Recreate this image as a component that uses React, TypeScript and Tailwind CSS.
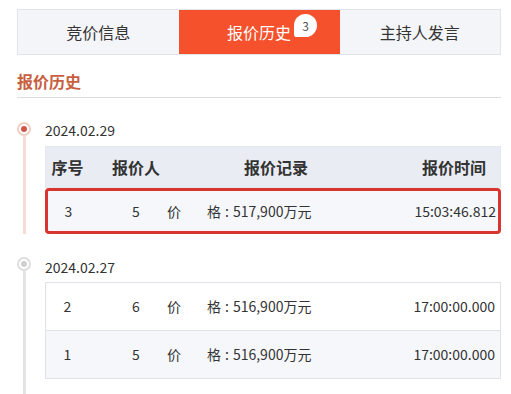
import React from "react";

type Bid = { no: number; bidder: number; price: string; time: string };

const font = "font-['Noto_Sans_CJK_SC','Noto_Sans',sans-serif]";

function Badge({ n }: { n: number }) {
  return (
    <span className="absolute top-[-6px] left-full ml-[3px] flex h-[23px] w-[23px] items-center justify-center rounded-[12px_12px_12px_3px] bg-white text-[12px] leading-none text-[#555]">
      {n}
    </span>
  );
}

function Tabs() {
  const tabs = ["竞价信息", "报价历史", "主持人发言"];
  return (
    <div className="mt-[9px] flex h-[46px] border border-[#e1e4ea] bg-[#f3f5f8]">
      {tabs.map((t, i) => (
        <div
          key={t}
          className={
            i === 1
              ? "flex w-[161px] items-center justify-center bg-[#f5512c] text-[16px] text-white"
              : "flex flex-1 items-center justify-center text-[16px] text-[#333]"
          }
        >
          <span className="relative">
            {t}
            {i === 1 && <Badge n={3} />}
          </span>
        </div>
      ))}
    </div>
  );
}

function BidRow({ bid, hot, odd }: { bid: Bid; hot?: boolean; odd?: boolean }) {
  return (
    <div
      className={
        hot
          ? "flex h-[46px] items-center rounded-[4px] border-[3px] border-[#d8352e] bg-[#f5f7fa] text-[14px] text-[#333]"
          : odd
            ? "flex h-[48px] items-center border-t border-[#dfe2e8] bg-[#f5f7fa] text-[14px] text-[#333]"
            : "flex h-[47px] items-center bg-white text-[14px] text-[#333]"
      }
    >
      <div className={hot ? "w-[41px] text-center" : "w-[43px] text-center"}>{bid.no}</div>
      <div className="ml-[22px] w-[50px] text-center">{bid.bidder}</div>
      <div className="w-[230px] pl-[6px]">
        <span className="mr-[26px]">价</span>格<span className="mx-[4px]">:</span>
        {bid.price}
      </div>
      <div className={hot ? "flex-1 pr-[2px] text-right" : "flex-1 pr-[5px] text-right"}>{bid.time}</div>
    </div>
  );
}

function Dot({ active }: { active?: boolean }) {
  return (
    <div
      className={
        active
          ? "flex h-[14px] w-[14px] shrink-0 items-center justify-center rounded-full border-2 border-[#f2cfc4] bg-white"
          : "flex h-[14px] w-[14px] shrink-0 items-center justify-center rounded-full border-2 border-[#dedede] bg-white"
      }
    >
      <div className={active ? "h-[6px] w-[6px] rounded-full bg-[#d2564a]" : "h-[6px] w-[6px] rounded-full bg-[#cfcfcf]"} />
    </div>
  );
}

export default function App() {
  const today: Bid = { no: 3, bidder: 5, price: "517,900万元", time: "15:03:46.812" };
  const earlier: Bid[] = [
    { no: 2, bidder: 6, price: "516,900万元", time: "17:00:00.000" },
    { no: 1, bidder: 5, price: "516,900万元", time: "17:00:00.000" },
  ];

  return (
    <div className={`h-[394px] w-[511px] overflow-hidden bg-white ${font}`}>
      <div className="ml-[17px] w-[484px]">
        <Tabs />

        <div className="border-b border-[#dcdcdc] pt-[14px] pb-[4px] text-[16px] leading-[24px] font-bold text-[#c8603f]">
          报价历史
        </div>

        {/* timeline */}
        <div className="mt-[22px]">
          <div className="flex pb-[23px]">
            <div className="flex w-[14px] flex-col items-center pt-[2px]">
              <Dot active />
              <div className="w-[3px] flex-1 bg-[#f6dcd3]" />
            </div>
            <div className="ml-[14px] flex-1">
              <div className="text-[14px] leading-[20px] text-[#333]">2024.02.29</div>
              <div className="mt-[6px]">
                <div className="flex h-[42px] items-center border border-[#e3e7ee] bg-[#e9edf3] text-[16px] font-bold text-[#333]">
                  <div className="w-[43px] text-center">序号</div>
                  <div className="ml-[22px] w-[50px] text-center">报价人</div>
                  <div className="w-[230px] text-center">报价记录</div>
                  <div className="flex-1 pr-[14px] text-right">报价时间</div>
                </div>
                <BidRow bid={today} hot />
              </div>
            </div>
          </div>

          <div className="flex">
            <div className="flex w-[14px] flex-col items-center">
              <Dot />
              <div className="h-[140px] w-[3px] bg-[#e3e3e3]" />
            </div>
            <div className="ml-[14px] flex-1">
              <div className="text-[14px] leading-[20px] text-[#333]">2024.02.27</div>
              <div className="mt-[5px] border border-[#dfe2e8]">
                {earlier.map((b, i) => (
                  <BidRow key={b.no} bid={b} odd={i === 1} />
                ))}
              </div>
            </div>
          </div>
        </div>
      </div>
    </div>
  );
}
